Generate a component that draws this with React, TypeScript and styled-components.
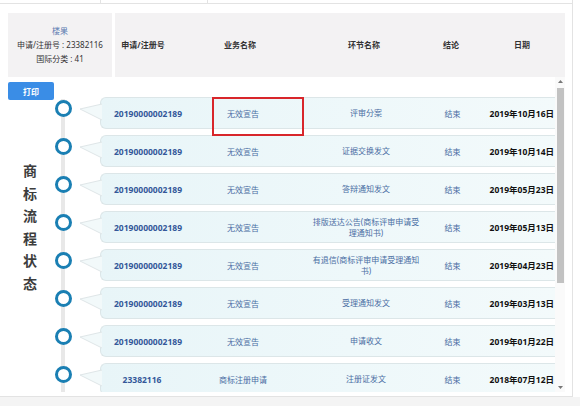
import React from "react";
import styled, { createGlobalStyle } from "styled-components";

const GlobalStyle = createGlobalStyle`
  html, body { margin: 0; padding: 0; background: #fff; }
  body { font-family: "Noto Sans", "Noto Sans CJK SC", sans-serif; }
  * { box-sizing: border-box; }
`;

const Page = styled.div`
  width: 580px;
  height: 406px;
  display: flex;
  flex-direction: column;
  overflow: hidden;
`;

const TopStrip = styled.div`
  width: 573px;
  height: 4px;
  display: grid;
  grid-template-columns: 101px 107px 1fr;
  border-bottom: 1px solid #e3e3e3;
  border-right: 1px solid #e3e3e3;
`;

const TopCell = styled.div<{ $line?: boolean }>`
  border-right: ${(p) => (p.$line ? "1px solid #e3e3e3" : "none")};
`;

const Frame = styled.div`
  width: 573px;
  height: 393px;
  padding: 9px 0 0 8px;
  border-right: 1px solid #e3e3e3;
  border-bottom: 1px solid #e3e3e3;
  display: flex;
  flex-direction: column;
`;

const HeaderRow = styled.div`
  display: flex;
  gap: 3px;
  height: 64px;
  flex-shrink: 0;
`;

const InfoBox = styled.div`
  width: 104px;
  background: #f3f2f3;
  display: flex;
  flex-direction: column;
  align-items: center;
  justify-content: center;
  font-size: 8px;
  line-height: 14px;
  color: #333;
`;

const InfoTitle = styled.div`
  color: #5a78b0;
`;

const HeaderBox = styled.div`
  width: 450px;
  background: #f3f2f3;
  display: grid;
  grid-template-columns: 56px 138px 110px 64px 78px;
  align-items: center;
  font-size: 8px;
  font-weight: 700;
  color: #333;
  padding-bottom: 2px;
`;

const HeadCell = styled.div`
  text-align: center;
  white-space: nowrap;
`;

const Body = styled.div`
  height: 315px;
  display: flex;
  overflow: hidden;
  margin-left: -8px;
  padding-left: 8px;
`;

const LeftPanel = styled.div`
  width: 47px;
  flex-shrink: 0;
  display: flex;
  flex-direction: column;
  align-items: flex-start;
`;

const PrintButton = styled.button`
  margin-top: 5px;
  width: 46px;
  height: 18px;
  border: none;
  border-radius: 2px;
  background: #3a8de6;
  color: #fff;
  font-family: inherit;
  font-size: 8px;
  font-weight: 700;
  padding: 0;
`;

const VerticalTitle = styled.div`
  margin-top: 60px;
  margin-left: 15px;
  width: 14px;
  font-size: 14px;
  line-height: 22.6px;
  font-weight: 700;
  color: #3d3d3d;
  text-align: center;
  word-break: break-all;
`;

const Timeline = styled.div`
  width: 500px;
  flex-shrink: 0;
  display: flex;
  flex-direction: column;
  gap: 6px;
  padding-top: 20px;
  background: linear-gradient(#e8e8e8, #e8e8e8) no-repeat 6px 22px / 4px 100%;
`;

const Item = styled.div`
  display: flex;
  height: 32px;
  flex-shrink: 0;
`;

const NodeCell = styled.div`
  width: 45px;
  flex-shrink: 0;
`;

const Circle = styled.div`
  margin-top: 3px;
  width: 17px;
  height: 17px;
  border-radius: 50%;
  border: 3px solid #1a7fb3;
  background: #fff;
`;

const Card = styled.div`
  position: relative;
  flex: 1;
  height: 32px;
  border: 1px solid #dce6e8;
  border-right: none;
  border-radius: 6px 0 0 6px;
  background: linear-gradient(90deg, #e8f5f8 0%, #eef8fa 55%, #f3fafb 100%);
  display: grid;
  grid-template-columns: 94px 96px 150px 23px 1fr;
  align-items: center;
`;

const Pointer = styled.svg`
  position: absolute;
  left: -21px;
  top: -1px;
  width: 22px;
  height: 32px;
  overflow: visible;
`;

const NumCell = styled.div<{ $short?: boolean }>`
  text-align: center;
  padding-right: ${(p) => (p.$short ? "12px" : "0")};
  font-size: 8.5px;
  font-weight: 700;
  color: #34589a;
  white-space: nowrap;
`;

const TextCell = styled.div`
  text-align: center;
  font-size: 8px;
  color: #4a6da3;
  white-space: nowrap;
`;

const StepCell = styled.div`
  text-align: center;
  font-size: 8px;
  line-height: 11.5px;
  color: #4a6da3;
  padding: 0 20px;
`;

const DateCell = styled.div`
  text-align: right;
  padding-right: 1px;
  font-size: 8.5px;
  font-weight: 700;
  color: #111;
  white-space: nowrap;
`;

const Highlight = styled.div`
  position: absolute;
  left: 111px;
  top: -1px;
  width: 92px;
  height: 39px;
  border: 2px solid #d8262b;
  z-index: 2;
`;

const Scrollbar = styled.div`
  width: 10px;
  flex-shrink: 0;
  display: flex;
  flex-direction: column;
  background: #fafafa;
`;

const Arrow = styled.div`
  height: 9px;
  display: flex;
  align-items: center;
  justify-content: center;
`;

const Track = styled.div`
  flex: 1;
  padding: 2px 1px 0 2px;
`;

const Thumb = styled.div`
  width: 7px;
  height: 195px;
  background: #c2c2c2;
`;

const Footer = styled.div`
  flex: 1;
  background: #f4f4f4;
`;

type Row = { num: string; biz: string; step: string; result: string; date: string };

const rows: Row[] = [
  { num: "20190000002189", biz: "无效宣告", step: "评审分案", result: "结束", date: "2019年10月16日" },
  { num: "20190000002189", biz: "无效宣告", step: "证据交换发文", result: "结束", date: "2019年10月14日" },
  { num: "20190000002189", biz: "无效宣告", step: "答辩通知发文", result: "结束", date: "2019年05月23日" },
  { num: "20190000002189", biz: "无效宣告", step: "排版送达公告(商标评审申请受理通知书)", result: "结束", date: "2019年05月13日" },
  { num: "20190000002189", biz: "无效宣告", step: "有退信(商标评审申请受理通知书)", result: "结束", date: "2019年04月23日" },
  { num: "20190000002189", biz: "无效宣告", step: "受理通知发文", result: "结束", date: "2019年03月13日" },
  { num: "20190000002189", biz: "无效宣告", step: "申请收文", result: "结束", date: "2019年01月22日" },
  { num: "23382116", biz: "商标注册申请", step: "注册证发文", result: "结束", date: "2018年07月12日" },
];

export default function App() {
  return (
    <>
      <GlobalStyle />
      <Page>
        <TopStrip>
          <TopCell $line />
          <TopCell $line />
          <TopCell />
        </TopStrip>
        <Frame>
          <HeaderRow>
            <InfoBox>
              <InfoTitle>楼果</InfoTitle>
              <div>申请/注册号 : 23382116</div>
              <div>国际分类 : 41</div>
            </InfoBox>
            <HeaderBox>
              <HeadCell>申请/注册号</HeadCell>
              <HeadCell>业务名称</HeadCell>
              <HeadCell>环节名称</HeadCell>
              <HeadCell>结论</HeadCell>
              <HeadCell>日期</HeadCell>
            </HeaderBox>
          </HeaderRow>
          <Body>
            <LeftPanel>
              <PrintButton>打印</PrintButton>
              <VerticalTitle>商标流程状态</VerticalTitle>
            </LeftPanel>
            <Timeline>
              {rows.map((r, i) => (
                <Item key={i}>
                  <NodeCell>
                    <Circle />
                  </NodeCell>
                  <Card>
                    <Pointer viewBox="0 0 22 32">
                      <polygon points="0,12 22,7 22,23" fill="#f2f9fa" />
                      <polyline points="22,7 0,12 22,23" fill="none" stroke="#dfe6e8" strokeWidth="1" />
                    </Pointer>
                    <NumCell $short={r.num.length < 10}>{r.num}</NumCell>
                    <TextCell>{r.biz}</TextCell>
                    <StepCell>{r.step}</StepCell>
                    <TextCell>{r.result}</TextCell>
                    <DateCell>{r.date}</DateCell>
                    {i === 0 && <Highlight />}
                  </Card>
                </Item>
              ))}
            </Timeline>
            <Scrollbar>
              <Arrow>
                <svg width="5" height="3" viewBox="0 0 5 3">
                  <polygon points="0,3 2.5,0 5,3" fill="#777" />
                </svg>
              </Arrow>
              <Track>
                <Thumb />
              </Track>
              <Arrow>
                <svg width="5" height="3" viewBox="0 0 5 3">
                  <polygon points="0,0 5,0 2.5,3" fill="#777" />
                </svg>
              </Arrow>
            </Scrollbar>
          </Body>
        </Frame>
        <Footer />
      </Page>
    </>
  );
}
